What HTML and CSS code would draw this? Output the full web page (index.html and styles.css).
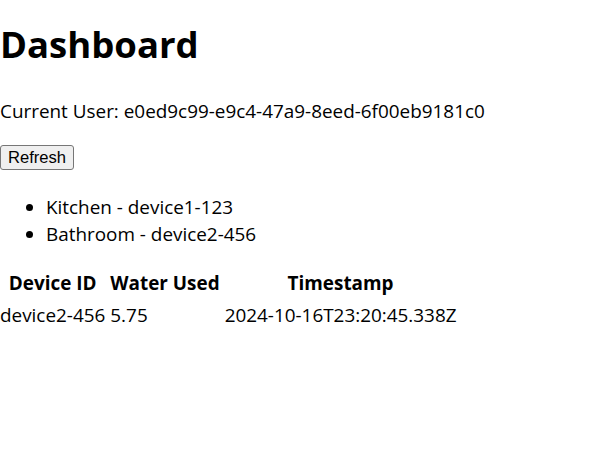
FILE: index.html
```html
<!DOCTYPE html>
<html>
<head>
<meta charset="utf-8">
<link rel="stylesheet" href="styles.css">
</head>
<body>
<div class="app">
  <h1 class="title">Dashboard</h1>
  <p class="user">Current User: e0ed9c99-e9c4-47a9-8eed-6f00eb9181c0</p>
  <button class="refresh">Refresh</button>
  <ul class="devices">
    <li>Kitchen - device1-123</li>
    <li>Bathroom - device2-456</li>
  </ul>
  <table class="usage">
    <thead>
      <tr><th>Device ID</th><th>Water Used</th><th>Timestamp</th></tr>
    </thead>
    <tbody>
      <tr><td>device2-456</td><td>5.75</td><td>2024-10-16T23:20:45.338Z</td></tr>
    </tbody>
  </table>
</div>
</body>
</html>
```

FILE: styles.css
```css
html, body {
  margin: 0;
  padding: 0;
  background: #fff;
}
body {
  font-family: "Open Sans", "Noto Sans", sans-serif;
  font-size: 18.9px;
  line-height: 27px;
  color: #000;
}
.title {
  font-size: 36.5px;
  line-height: 53px;
  font-weight: 700;
  margin: 18px 0 27px;
}
.user {
  margin: 0 0 20px;
}
.refresh {
  font-family: "Liberation Sans", Arial, sans-serif;
  font-size: 16.6px;
  padding: 1px 7px;
  height: 25px;
  background: #efefef;
  border: 1px solid #767676;
  border-radius: 3px;
  color: #000;
  display: block;
}
.devices {
  margin: 24px 0 20px;
  padding-left: 46px;
}
.usage {
  border-spacing: 0;
  margin-top: 14px;
}
.usage th, .usage td {
  padding: 2px 2px 3px 3px;
}
.usage th:first-child, .usage td:first-child {
  padding-left: 0;
}
.usage th {
  font-weight: 700;
  text-align: center;
}
.usage td {
  text-align: left;
}
```
